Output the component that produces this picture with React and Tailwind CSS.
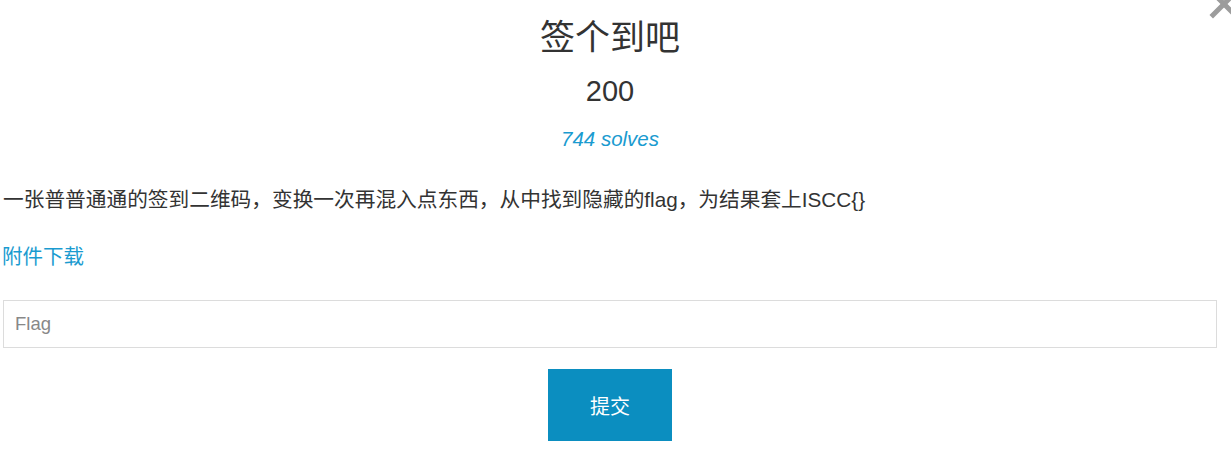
const font = { fontFamily: '"Liberation Sans", "Noto Sans CJK SC", sans-serif' }

export default function App() {
  return (
    <div className="relative w-[1231px] h-[465px] bg-white overflow-hidden text-[#333]" style={font}>
      {/* close */}
      <svg className="absolute left-[1209px] top-[-11px]" width="30" height="30" viewBox="0 0 30 30">
        <path d="M4 4L26 26M26 4L4 26" stroke="#9c9c9c" strokeWidth="5" strokeLinecap="square" />
      </svg>

      <div className="w-[1214px] ml-[3px] flex flex-col">
        <h3 className="text-center text-[35px] leading-none pt-[20px] text-[#333]">签个到吧</h3>
        <h4 className="text-center text-[29px] leading-none mt-[22px] text-[#333]">200</h4>
        <p className="text-center text-[20.5px] leading-none italic mt-[23px] text-[#1a9bd0]">744 solves</p>

        <p className="text-[20.7px] leading-none mt-[40px] text-[#333]">
          一张普普通通的签到二维码，变换一次再混入点东西，从中找到隐藏的flag，为结果套上ISCC{'{}'}
        </p>
        <a className="text-[20.5px] leading-none mt-[37px] -ml-[1px] text-[#1a9bd0]">附件下载</a>

        <input
          placeholder="Flag"
          className="mt-[32px] h-[48px] border border-[#dcdcdc] px-[11px] text-[18.5px] placeholder:text-[#888] outline-none"
          style={font}
        />

        <div className="flex justify-center mt-[21px]">
          <button className="w-[124px] h-[72px] pt-[5px] bg-[#0b8ec0] text-white text-[20px]">提交</button>
        </div>
      </div>
    </div>
  )
}
